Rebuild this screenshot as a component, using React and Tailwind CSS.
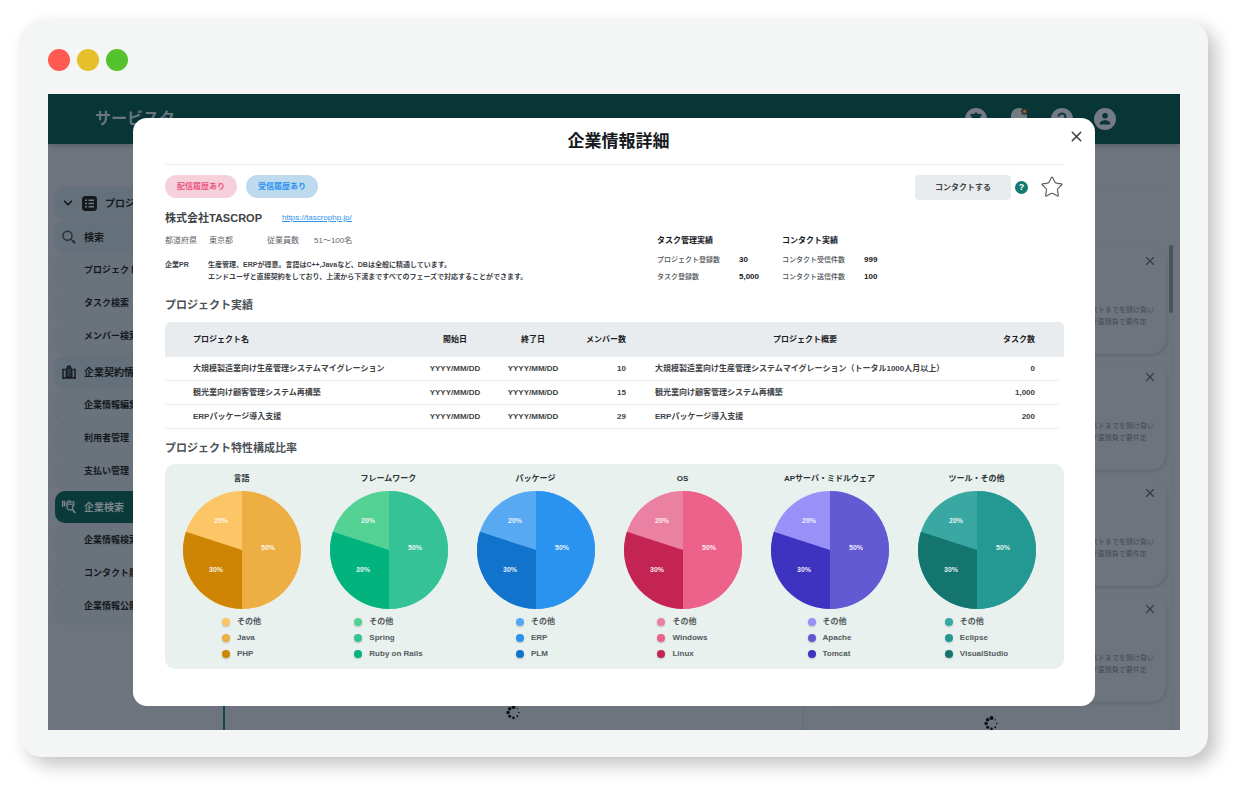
import React from 'react';
import { ChevronDown, Search, Star, X } from 'lucide-react';

const menuGroups = [
  [
    { label: 'プロジェクト管理', icon: 'project', parent: true },
    { label: '検索', icon: 'search', parent: true },
    { label: 'プロジェクト検索' },
    { label: 'タスク検索' },
    { label: 'メンバー検索' },
  ],
  [
    { label: '企業契約情報', icon: 'building', parent: true },
    { label: '企業情報編集' },
    { label: '利用者管理' },
    { label: '支払い管理' },
  ],
  [
    { label: '企業検索', icon: 'companySearch', parent: true, active: true },
    { label: '企業情報検索' },
    { label: 'コンタクト履歴' },
    { label: '企業情報公開' },
  ],
];

const projects = [
  {
    name: '大規模製造業向け生産管理システムマイグレーション',
    members: 10,
    summary: '大規模製造業向け生産管理システムマイグレーション（トータル1000人月以上）',
    tasks: '0',
  },
  { name: '観光業向け顧客管理システム再構築', members: 15, summary: '観光業向け顧客管理システム再構築', tasks: '1,000' },
  { name: 'ERPパッケージ導入支援', members: 29, summary: 'ERPパッケージ導入支援', tasks: '200' },
];

// colors and labels are ordered 20%, 50%, 30%
const charts = [
  { title: '言語', labels: ['その他', 'Java', 'PHP'], colors: ['#fcc566', '#edae44', '#cf8504'] },
  { title: 'フレームワーク', labels: ['その他', 'Spring', 'Ruby on Rails'], colors: ['#54d294', '#36c297', '#02b37d'] },
  { title: 'パッケージ', labels: ['その他', 'ERP', 'PLM'], colors: ['#57aaf2', '#2a92ef', '#1173cb'] },
  { title: 'OS', labels: ['その他', 'Windows', 'Linux'], colors: ['#ea81a3', '#ed628b', '#c42453'] },
  { title: 'APサーバ・ミドルウェア', labels: ['その他', 'Apache', 'Tomcat'], colors: ['#9a91f8', '#625ad3', '#3d33c0'] },
  { title: 'ツール・その他', labels: ['その他', 'Eclipse', 'VisualStudio'], colors: ['#39a8a3', '#249892', '#14756f'] },
];

function MenuIcon({ name }) {
  if (name === 'project') {
    return (
      <>
        <ChevronDown className="-ml-px h-[14px] w-[14px] shrink-0" strokeWidth={3} />
        <svg className="ml-[7px] mr-2 h-[15px] w-[15px] shrink-0" viewBox="0 0 15 15">
          <rect width="15" height="15" rx="3.5" fill="#15191d" />
          <path d="M3 4.2h2M3 7.5h2M3 10.8h2M6.5 4.2H12M6.5 7.5H12M6.5 10.8H12" stroke="#747b84" strokeWidth="1.5" />
        </svg>
      </>
    );
  }
  if (name === 'search') {
    return (
      <svg className="mr-2 h-[14px] w-[14px] shrink-0" viewBox="0 0 14 14" fill="none" stroke="#2b3035" strokeLinecap="round">
        <circle cx="5.500" cy="5.800" r="4.500" strokeWidth="1.400" />
        <path d="M9 9.300l1.500 1.300" strokeWidth="1.200" />
        <path d="M11 11.200l1.600 1.400" strokeWidth="2.200" />
      </svg>
    );
  }
  if (name === 'building') {
    return (
      <svg className="mr-2 h-[14px] w-[14px] shrink-0" viewBox="0 0 14 14" fill="none" stroke="#15191d">
        <path d="M4 13V3.500L5.500 2.500V1h3v1.500L10 3.500V13z" fill="#20262b" strokeWidth="1" />
        <path d="M3 4.500H1V13h2M11 4.500h2V13h-2" strokeWidth="1.400" />
        <path d="M0 13h14" strokeWidth="1" />
        <path d="M6 4v7M8 4v7" stroke="#56606a" strokeWidth=".8" strokeDasharray="1.500 1" />
      </svg>
    );
  }
  return (
    <svg className="mr-2 h-[14px] w-[14px] shrink-0" viewBox="0 0 14 14" fill="none" stroke="#7d858c">
      <path d="M.6 1v6M2.400 1v5.500M4.200 2v4M6 1v3M8 1v2M10 1v2.500M11.800 1v5" strokeWidth="1.200" />
      <path d="M0 1.200h3M5 1h4" strokeWidth="1" />
      <circle cx="8" cy="7" r="3" strokeWidth="1.200" />
      <path d="M10.300 9.500l3 3.500" strokeWidth="1.700" />
    </svg>
  );
}

function SidebarItem({ item }) {
  const tone = item.active
    ? 'bg-[#0a3b3a] text-[#7d858c]'
    : item.parent
      ? 'bg-[#65717a] text-[#15191d]'
      : 'bg-[#6a727c] text-[#15191d]';
  return (
    <a
      href="#"
      className={`flex h-8 items-center whitespace-nowrap rounded-[10px] font-bold shadow-[0_1px_2px_rgba(60,75,85,0.12)] ${tone} ${
        item.parent ? 'mb-[2px] pl-[7px] text-[10px]' : 'mb-px pl-[29px] text-[9px]'
      }`}
    >
      {item.icon && <MenuIcon name={item.icon} />}
      {item.label}
    </a>
  );
}

function Spinner() {
  const radii = [2.1, 0.7, 0.8, 1, 1.4, 1.6, 1.8, 1.9];
  return (
    <svg className="h-[15px] w-[15px]" viewBox="0 0 15 15">
      {radii.map((r, i) => {
        const a = (i * Math.PI) / 4;
        return <circle key={i} cx={7.5 + 5.4 * Math.sin(a)} cy={7.5 - 5.4 * Math.cos(a)} r={r * 0.95} fill="#0b0f12" />;
      })}
    </svg>
  );
}

function HeaderIcons() {
  return (
    <div className="flex gap-[21px]">
      <svg className="h-[22px] w-[22px]" viewBox="0 0 22 22">
        <circle cx="11" cy="11" r="11" fill="#757b85" />
        <path d="M10 4.500h2l.5 1.500h4v2h-1v7h-9V8h-1V6h4z" fill="#083536" />
      </svg>
      <svg className="h-[22px] w-[22px]" viewBox="0 0 22 22">
        <path d="M3 18V8a8 8 0 0 1 16 0v10z" fill="#757b85" />
        <circle cx="16.500" cy="3.500" r="3" fill="#3c3431" stroke="#3c3431" strokeWidth="1.500" strokeDasharray="1.200 1" />
        <circle cx="16.500" cy="3.500" r="1.300" fill="#a4772f" />
      </svg>
      <svg className="h-[22px] w-[22px]" viewBox="0 0 22 22">
        <circle cx="11" cy="11" r="11" fill="#757b85" />
        <path d="M7.500 8.500a3.500 3 0 1 1 5.300 2.600c-1.300.8-1.800 1.300-1.800 2.600" fill="none" stroke="#083536" strokeWidth="2" />
        <circle cx="11" cy="16.500" r="1.200" fill="#083536" />
      </svg>
      <svg className="h-[22px] w-[22px]" viewBox="0 0 22 22">
        <circle cx="11" cy="11" r="11" fill="#757b85" />
        <circle cx="11" cy="7.800" r="2.800" fill="#083536" />
        <path d="M5.800 16.500v-1.400c0-1.900 3-2.900 5.200-2.900s5.200 1 5.200 2.900v1.400z" fill="#083536" />
      </svg>
    </div>
  );
}

function BackgroundPage() {
  return (
    <div className="col-start-1 row-start-1 flex min-w-0 flex-col bg-[#6d747e]">
      <header className="flex h-[50px] shrink-0 items-center justify-between bg-[#083536] pl-[47px] pr-16 shadow-[0_2px_4px_rgba(40,60,65,0.3)]">
        <span className="text-[16px] font-bold text-[#69767d]">サービスタ</span>
        <HeaderIcons />
      </header>
      <div className="flex flex-1">
        <nav className="w-[177px] shrink-0 border-r-2 border-[#0d4a4a] px-[7px] pt-[43px]">
          {menuGroups.map((group, i) => (
            <div key={i} className="pb-[2px]">
              {group.map((item) => (
                <SidebarItem key={item.label} item={item} />
              ))}
            </div>
          ))}
        </nav>
        <main className="flex flex-1 items-end justify-center pb-[10px]">
          <Spinner />
        </main>
        <aside className="flex w-[378px] shrink-0 border-l-2 border-[#65727b]">
          <div className="min-w-0 flex-1 pl-3">
            <div className="mb-[61px] mt-10 border-b border-[#69727b]" />
            <div className="flex flex-col gap-2">
              {[0, 1, 2, 3].map((i) => (
                <article
                  key={i}
                  className="flex h-[108px] flex-col items-end rounded-2xl pr-[9px] pt-2 shadow-[1px_2px_3px_rgba(65,80,90,0.3)]"
                >
                  <button type="button" aria-label="閉じる" className="text-[#363c42]">
                    <X className="h-[14px] w-[14px]" strokeWidth={2} />
                  </button>
                  <p className="mr-[3px] mt-9 whitespace-nowrap text-[7px] leading-3 text-[#454b51]">
                    要件定義から設計、開発、テストまでを請け負い
                    <br />
                    ました。現在も、エンドユーザ直請負で要件定
                  </p>
                </article>
              ))}
            </div>
            <div className="mt-[14px] flex h-[14px] justify-center overflow-hidden">
              <Spinner />
            </div>
          </div>
          <div className="ml-[3px] mr-[6px] mt-[101px] w-[5px] bg-[#69737c]">
            <div className="h-[68px] w-[4px] rounded-full bg-[#4b5258]" />
          </div>
        </aside>
      </div>
    </div>
  );
}

function PieChart({ chart }) {
  const [light, mid, dark] = chart.colors;
  return (
    <div className="flex flex-col items-center">
      <h4 className="whitespace-nowrap text-[8px] font-bold leading-3 text-[#2c3236]">{chart.title}</h4>
      <svg className="mt-[6px] h-[118px] w-[118px]" viewBox="0 0 118 118">
        <circle cx="59" cy="59" r="59" fill={light} />
        <path d="M59 59V0a59 59 0 0 1 0 118z" fill={mid} />
        <path d="M59 59V118A59 59 0 0 1 2.890 40.770z" fill={dark} />
        <g fill="#fff" fillOpacity="0.9" fontSize="7" fontWeight="bold" textAnchor="middle">
          <text x="38" y="32">20%</text>
          <text x="85" y="59">50%</text>
          <text x="33" y="81">30%</text>
        </g>
      </svg>
      <ul className="mt-[7px] flex flex-col gap-1">
        {chart.labels.map((label, i) => (
          <li key={label} className="flex items-center text-[8px] font-bold leading-3 text-[#555b5f]">
            <span
              className="mr-[7px] h-2 w-2 rounded-full shadow-[0_1px_2px_rgba(0,0,0,0.2)]"
              style={{ backgroundColor: chart.colors[i] }}
            />
            {label}
          </li>
        ))}
      </ul>
    </div>
  );
}

function Stats({ title, rows }) {
  return (
    <div className="w-[125px]">
      <h4 className="text-[8px] font-bold leading-3 text-[#15191d]">{title}</h4>
      <dl className="mt-[7px] flex flex-col gap-[5px]">
        {rows.map(([label, value]) => (
          <div key={label} className="flex leading-3">
            <dt className="w-[82px] text-[7px] font-medium text-[#4c5257]">{label}</dt>
            <dd className="text-[8px] font-bold text-[#15191d]">{value}</dd>
          </div>
        ))}
      </dl>
    </div>
  );
}

function ProjectTable() {
  const cell = 'h-6 border-b border-[#e9ebec] p-0 leading-none';
  return (
    <table className="mt-[7px] w-full table-fixed border-separate border-spacing-0 whitespace-nowrap text-[8px] font-bold text-[#3e4347]">
      <thead className="bg-[#e8ecee] text-[#1c2024]">
        <tr>
          <th className="h-[35px] w-[251px] rounded-tl-md p-0 pl-7 text-left">プロジェクト名</th>
          <th className="w-[78px] p-0">開始日</th>
          <th className="w-[78px] p-0">終了日</th>
          <th className="w-[74px] p-0 pr-5 text-right">メンバー数</th>
          <th className="p-0">プロジェクト概要</th>
          <th className="w-[95px] p-0 pr-6 text-right">タスク数</th>
          <th className="w-[5px] rounded-tr-md p-0" />
        </tr>
      </thead>
      <tbody>
        {projects.map((p) => (
          <tr key={p.name}>
            <td className={`${cell} pl-7`}>{p.name}</td>
            <td className={`${cell} text-center`}>YYYY/MM/DD</td>
            <td className={`${cell} text-center`}>YYYY/MM/DD</td>
            <td className={`${cell} pr-5 text-right`}>{p.members}</td>
            <td className={`${cell} pl-[9px]`}>{p.summary}</td>
            <td className={`${cell} pr-6 text-right`}>{p.tasks}</td>
            <td className="p-0" />
          </tr>
        ))}
      </tbody>
    </table>
  );
}

function CompanyModal() {
  return (
    <section
      role="dialog"
      aria-labelledby="company-title"
      className="z-10 col-start-1 row-start-1 mx-[85px] my-6 min-w-0 rounded-[14px] bg-white pb-9"
    >
      <header className="flex h-[46px] items-start pl-10 pr-[7px]">
        <h2 id="company-title" className="flex-1 pt-3 text-center text-[17px] font-bold leading-6 text-[#15191d]">
          企業情報詳細
        </h2>
        <button type="button" aria-label="閉じる" className="flex h-9 w-6 items-center justify-center text-[#33393e]">
          <X className="h-[17px] w-[17px]" strokeWidth={2} />
        </button>
      </header>

      <div className="ml-8 mr-[31px] border-t border-[#e6efec] pt-[10px]">
        <div className="flex h-[25px] items-start">
          <span className="rounded-full bg-[#f6d0da] px-3 text-[8px] font-bold leading-[23px] text-[#ed5586]">配信履歴あり</span>
          <span className="ml-[9px] rounded-full bg-[#bddaee] px-3 text-[8px] font-bold leading-[23px] text-[#2a92ef]">
            受信履歴あり
          </span>
          <button type="button" className="ml-auto h-[25px] w-24 rounded bg-[#e8ecee] text-[8px] font-bold text-[#3e4347]">
            コンタクトする
          </button>
          <button
            type="button"
            aria-label="ヘルプ"
            className="ml-1 mt-[6px] h-[13px] w-[13px] rounded-full bg-[#137a6f] text-center text-[9px] font-bold leading-[13px] text-white"
          >
            ?
          </button>
          <button type="button" aria-label="お気に入り" className="ml-3 text-[#5d6368]">
            <Star className="h-6 w-6" strokeWidth={1.2} />
          </button>
        </div>

        <div className="mt-2 flex items-center leading-5">
          <h3 className="text-[11px] font-bold text-[#3e4347]">株式会社TASCROP</h3>
          <a href="https://tascrophp.jp/" className="ml-5 text-[8px] text-[#2a92ef] underline">
            https://tascrophp.jp/
          </a>
        </div>

        <div className="mt-[7px] flex justify-between whitespace-nowrap">
          <div>
            <div className="flex text-[8px] leading-3 text-[#5f656a]">
              <span className="w-11">都道府県</span>
              <span className="w-[58px]">東京都</span>
              <span className="w-[47px]">従業員数</span>
              <span>51〜100名</span>
            </div>
            <div className="mt-3 flex text-[7px] font-bold leading-3 text-[#3e4347]">
              <span className="w-[43px]">企業PR</span>
              <p>
                生産管理、ERPが得意。言語はC++,Javaなど、DBは全般に精通しています。
                <br />
                エンドユーザと直接契約をしており、上流から下流まですべてのフェーズで対応することができます。
              </p>
            </div>
          </div>
          <div className="mr-[157px] flex">
            <Stats title="タスク管理実績" rows={[['プロジェクト登録数', '30'], ['タスク登録数', '5,000']]} />
            <Stats title="コンタクト実績" rows={[['コンタクト受信件数', '999'], ['コンタクト送信件数', '100']]} />
          </div>
        </div>

        <h3 className="mt-3 text-[11px] font-bold leading-5 text-[#4c5257]">プロジェクト実績</h3>
        <ProjectTable />

        <h3 className="mt-[9px] text-[11px] font-bold leading-5 text-[#4c5257]">プロジェクト特性構成比率</h3>
        <div className="mt-[6px] grid grid-cols-6 rounded-[10px] bg-[#e8f1ee] pb-[9px] pl-[3px] pr-[14px] pt-[9px]">
          {charts.map((chart) => (
            <PieChart key={chart.title} chart={chart} />
          ))}
        </div>
      </div>
    </section>
  );
}

export default function App() {
  return (
    <div className="bg-white pb-[30px] pl-5 pr-[30px] pt-5 font-['Liberation_Sans','Noto_Sans_CJK_JP',sans-serif]">
      <div className="rounded-[22px] bg-[#f4f5f5] px-7 pb-[27px] pt-[29px] shadow-[8px_8px_18px_rgba(0,0,0,0.24)]">
        <div className="mb-[23px] flex gap-[7px]">
          <span className="h-[22px] w-[22px] rounded-full bg-[#ff5b53]" />
          <span className="h-[22px] w-[22px] rounded-full bg-[#e6c02a]" />
          <span className="h-[22px] w-[22px] rounded-full bg-[#54c22c]" />
        </div>
        <div className="grid grid-cols-1 overflow-hidden">
          <BackgroundPage />
          <CompanyModal />
        </div>
      </div>
    </div>
  );
}
